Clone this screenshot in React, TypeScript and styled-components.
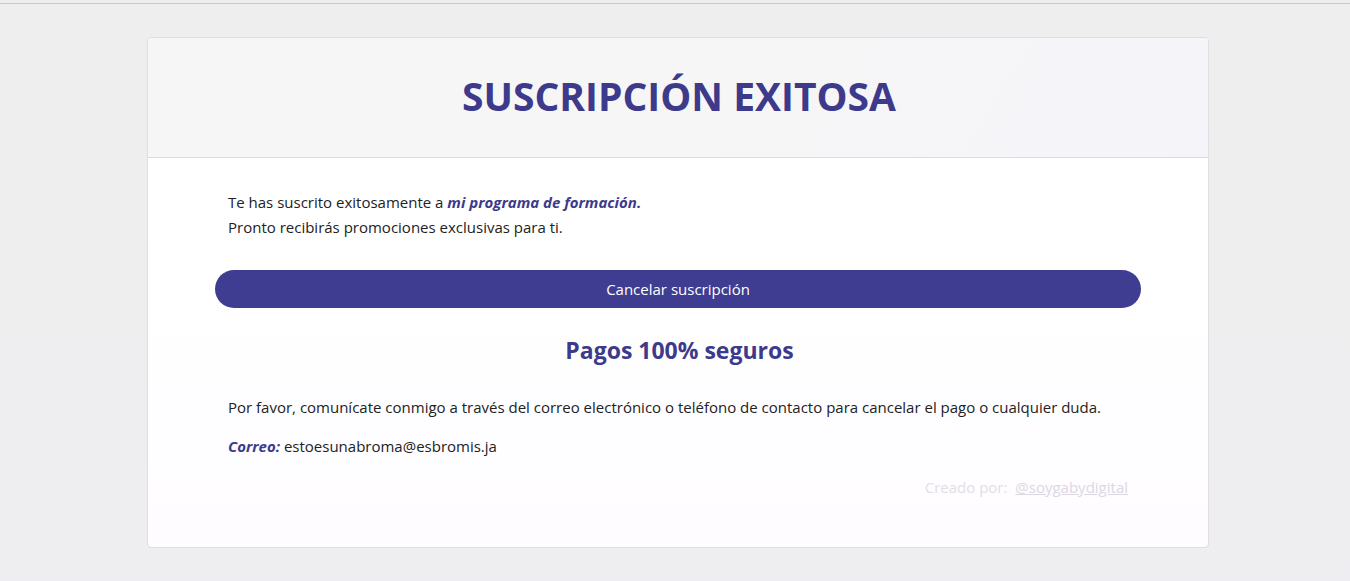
import React from "react";
import styled, { createGlobalStyle } from "styled-components";

const Global = createGlobalStyle`
  html, body { margin: 0; padding: 0; }
  body {
    font-family: "Open Sans", "Noto Sans", sans-serif;
    background: linear-gradient(180deg, #eeeeee 0%, #eeeeee 40%, #eeedf1 100%);
    min-height: 581px;
  }
`;

const Page = styled.div`
  min-height: 581px;
  box-sizing: border-box;
  border-top: 1px solid #c9c9c9;
  margin-top: 3px;
  padding: 33px 0 0 6px;
  display: flex;
  justify-content: center;
  align-items: flex-start;
`;

const Card = styled.div`
  width: 1062px;
  box-sizing: border-box;
  border: 1px solid #dedde2;
  border-radius: 4px;
  background: linear-gradient(180deg, #ffffff 0%, #ffffff 50%, #fefcff 100%);
  overflow: hidden;
`;

const Header = styled.div`
  height: 120px;
  box-sizing: border-box;
  border-bottom: 1px solid #dcdcdc;
  background: linear-gradient(120deg, #f6f6f6 0%, #f6f6f6 55%, #f5f4fa 100%);
  display: flex;
  align-items: center;
  justify-content: center;
  padding-bottom: 5px;
`;

const Title = styled.h1`
  margin: 0;
  font-family: "Open Sans", sans-serif;
  font-weight: 700;
  font-size: 39px;
  color: #3d3a8c;
  letter-spacing: 0;
  padding-left: 2px;
`;

const Body = styled.div`
  padding: 32px 67px 47px 67px;
  display: flex;
  flex-direction: column;
`;

const Text = styled.p<{ $mt?: number }>`
  margin: ${(p) => p.$mt ?? 0}px 0 0 0;
  padding: 0 13px;
  font-size: 15px;
  line-height: 25px;
  color: #222222;
`;

const Em = styled.em`
  font-weight: 700;
  font-style: italic;
  color: #3d3a8c;
`;

const Button = styled.button`
  margin-top: 30px;
  height: 38px;
  border: none;
  border-radius: 19px;
  background: #3f3d91;
  color: #ffffff;
  font-family: "Open Sans", sans-serif;
  font-size: 15px;
  cursor: pointer;
`;

const SubTitle = styled.h2`
  margin: 27px 0 0 0;
  text-align: center;
  font-family: "Open Sans", sans-serif;
  font-weight: 700;
  font-size: 23px;
  line-height: 30px;
  color: #3d3a8c;
  padding-left: 3px;
`;

const Credit = styled.div`
  margin-top: 16px;
  padding-right: 13px;
  text-align: right;
  font-size: 15px;
  line-height: 25px;
  color: #e2dee7;
`;

const CreditLink = styled.a`
  color: #dcd8e2;
  text-decoration: underline;
  margin-left: 4px;
`;

export default function App() {
  return (
    <>
      <Global />
      <Page>
        <Card>
          <Header>
            <Title>SUSCRIPCIÓN EXITOSA</Title>
          </Header>
          <Body>
            <Text>
              Te has suscrito exitosamente a <Em>mi programa de formación.</Em>
              <br />
              Pronto recibirás promociones exclusivas para ti.
            </Text>
            <Button>Cancelar suscripción</Button>
            <SubTitle>Pagos 100% seguros</SubTitle>
            <Text $mt={30}>
              Por favor, comunícate conmigo a través del correo electrónico o teléfono de contacto para cancelar el pago o cualquier duda.
            </Text>
            <Text $mt={14}>
              <Em>Correo:</Em> estoesunabroma@esbromis.ja
            </Text>
            <Credit>
              Creado por: <CreditLink href="#">@soygabydigital</CreditLink>
            </Credit>
          </Body>
        </Card>
      </Page>
    </>
  );
}
